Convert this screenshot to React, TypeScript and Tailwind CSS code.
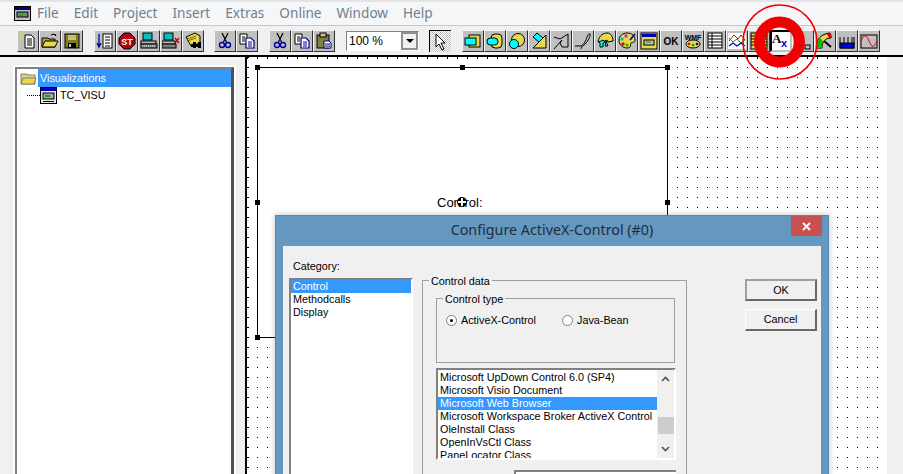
import type { ReactNode } from "react";

const S = ({ children }: { children: ReactNode }) => (
  <svg width="18" height="18" viewBox="0 0 18 18">
    {children}
  </svg>
);

const Btn = ({ children, on }: { children: ReactNode; on?: boolean }) => (
  <div
    className={
      on
        ? "w-[22px] h-[22px] flex items-center justify-center bg-white border-2 border-black border-r-[#c0c0c0] border-b-[#c0c0c0]"
        : "w-[22px] h-[22px] flex items-center justify-center bg-[#c0c0c0] border border-[#f4f4f4] border-r-[#303030] border-b-[#303030]"
    }
  >
    {children}
  </div>
);

const yellow = "#e8d84a";
const cyan = "#00ffff";

const groupA = [
  <S key="new">
    <path d="M6 3h6l3 3v10H6z" fill="#fff" stroke="#000" />
    <path d="M8 7h5M8 9h5M8 11h5M8 13h5" stroke="#000" />
    <path d="M1 3l3 1M3 1l1 3M1 6l3-1" stroke="#e8e000" />
  </S>,
  <S key="open">
    <path d="M1 6h6l1 1h6v8H1z" fill="#a8a040" stroke="#000" />
    <path d="M1 15l3-6h13l-3 6z" fill="#e8d84a" stroke="#000" />
    <path d="M10 3l3-1 2 2M15 4l-1-2" stroke="#000" fill="none" />
  </S>,
  <S key="save">
    <rect x="2" y="2" width="14" height="14" fill="#808020" stroke="#000" />
    <rect x="5" y="3" width="8" height="5" fill="#c0c080" />
    <rect x="5" y="11" width="8" height="5" fill="#000" />
    <rect x="6" y="12" width="2" height="3" fill="#c0c0c0" />
  </S>,
];

const groupB = [
  <S key="ref">
    <rect x="7" y="2" width="9" height="14" fill="#fff" stroke="#000" />
    <path d="M9 5h5M9 8h5M9 11h5M9 14h5" stroke="#000" />
    <path d="M3 2v12M1 11l2 4 2-4" stroke="#0000a0" fill="none" strokeWidth="1.3" />
  </S>,
  <S key="stop">
    <path d="M6 1h6l5 5v6l-5 5H6l-5-5V6z" fill="#b00018" stroke="#000" />
    <text x="9" y="12.5" textAnchor="middle" fontSize="9" fontWeight="700" fill="#fff" fontFamily="Liberation Sans, sans-serif">
      ST
    </text>
  </S>,
  <S key="online">
    <rect x="3" y="1" width="9" height="7" fill="#00c0c0" stroke="#000" />
    <rect x="1" y="9" width="15" height="3" fill="#c0c0c0" stroke="#000" />
    <rect x="1" y="12" width="16" height="4" fill="#808080" stroke="#000" />
    <path d="M2 14h14" stroke="#fff" strokeDasharray="1 1" />
  </S>,
  <S key="offline">
    <rect x="2" y="1" width="9" height="7" fill="#00c0c0" stroke="#000" />
    <rect x="0" y="9" width="13" height="3" fill="#c0c0c0" stroke="#000" />
    <rect x="0" y="12" width="14" height="4" fill="#808080" stroke="#000" />
    <path d="M13 6l4 5M17 6l-4 5" stroke="#c00000" strokeWidth="1.3" />
  </S>,
  <S key="files">
    <path d="M2 5l9-4 5 3v7l-9 3z" fill={yellow} stroke="#000" />
    <path d="M3 7l9-3M3 9l9-3" stroke="#806000" />
    <rect x="9" y="10" width="3" height="6" fill="#000" />
    <rect x="14" y="10" width="3" height="6" fill="#000" />
    <rect x="7" y="12" width="10" height="3" fill="#000" />
  </S>,
];

const Scissors = () => (
  <S>
    <path d="M6 1l5 10M12 1L7 11" stroke="#000" strokeWidth="1.2" />
    <circle cx="6" cy="13" r="2.5" fill="none" stroke="#0000a0" strokeWidth="1.4" />
    <circle cx="12" cy="13" r="2.5" fill="none" stroke="#0000a0" strokeWidth="1.4" />
  </S>
);

const Copy = () => (
  <S>
    <path d="M2 2h7v10H2z" fill="#fff" stroke="#000" />
    <path d="M4 5h3M4 7h3M4 9h3" stroke="#000" />
    <path d="M8 6h5l3 3v7H8z" fill="#fff" stroke="#000080" strokeWidth="1.2" />
    <path d="M10 10h4M10 12h4M10 14h4" stroke="#000080" />
  </S>
);

const groupD = [
  <Scissors key="cut" />,
  <Copy key="copy" />,
  <S key="paste">
    <rect x="2" y="3" width="12" height="13" fill="#808040" stroke="#000" />
    <rect x="5" y="1" width="6" height="4" fill="#d0c080" stroke="#000" />
    <path d="M9 9h5l2 2v5H9z" fill="#fff" stroke="#000080" />
    <path d="M10 12h5M10 14h5" stroke="#000080" />
  </S>,
];

const groupG = [
  <S key="rect">
    <rect x="5" y="3" width="11" height="12" fill={yellow} stroke="#000" />
    <rect x="1" y="6" width="11" height="7" fill={cyan} stroke="#000" />
  </S>,
  <S key="round">
    <rect x="5" y="2" width="11" height="14" rx="4" fill={yellow} stroke="#000" />
    <rect x="1" y="6" width="11" height="7" rx="3.5" fill={cyan} stroke="#000" />
  </S>,
  <S key="circle">
    <circle cx="10" cy="8" r="6.5" fill={yellow} stroke="#000" />
    <circle cx="6" cy="12" r="4.5" fill={cyan} stroke="#000" />
  </S>,
  <S key="poly">
    <path d="M16 3v13H3z" fill={yellow} stroke="#000" />
    <path d="M3 5l4-4 6 5-4 4z" fill={cyan} stroke="#000" />
  </S>,
  <S key="line">
    <path d="M2 5l6 2 8-5v13H10l-2-4 2-3-8 9" fill="none" stroke="#000" />
  </S>,
  <S key="curve">
    <path d="M1 14h5c3 0 6-5 7-9 1-3 3-4 3-3 1 2-3 9-6 11-2 1-3 3-3 4" fill="none" stroke="#000" />
  </S>,
  <S key="hat">
    <path d="M2 10C3 3 8 1 11 1c4 0 6 4 6 8l-5 1-1-2-5 2z" fill={yellow} stroke="#000" />
    <path d="M3 10l4-2 2 2-2 1v4H4v-4z" fill={cyan} stroke="#000" />
    <path d="M10 9l2 5h-3z" fill={cyan} stroke="#000" />
  </S>,
  <S key="palette">
    <path d="M9 1c5 0 8 3 8 7 0 3-3 2-4 3s1 5-4 5C4 16 1 12 1 8s4-7 8-7z" fill={yellow} stroke="#000" />
    <circle cx="8" cy="4" r="1.7" fill="#d020d0" />
    <circle cx="4" cy="7" r="1.7" fill="#00c0c0" />
    <circle cx="5" cy="12" r="1.7" fill="#e00000" />
    <circle cx="9" cy="13" r="1.5" fill="#00c000" />
    <path d="M17 2l-5 6" stroke="#000080" strokeWidth="1.6" />
  </S>,
  <S key="visu">
    <rect x="1" y="1" width="16" height="16" fill={yellow} stroke="#000" />
    <rect x="2" y="2" width="14" height="3" fill="#0000c0" />
    <rect x="4" y="8" width="10" height="5" fill="#c0c0c0" stroke="#000" />
    <path d="M6 10h5" stroke="#00a000" />
  </S>,
  <S key="ok">
    <text x="9" y="13" textAnchor="middle" fontSize="10" fontWeight="700" fill="#000" fontFamily="Liberation Sans, sans-serif">
      OK
    </text>
  </S>,
  <S key="wmf">
    <text x="9" y="8" textAnchor="middle" fontSize="7" fontWeight="700" fill="#000" fontFamily="Liberation Sans, sans-serif">
      WMF
    </text>
    <ellipse cx="9" cy="12" rx="7" ry="4" fill={yellow} stroke="#000" />
    <circle cx="5" cy="12" r="1.3" fill="#e00000" />
    <circle cx="9" cy="13" r="1.3" fill="#00a000" />
    <circle cx="13" cy="12" r="1.3" fill="#0000c0" />
  </S>,
  <S key="table">
    <rect x="2" y="1" width="14" height="15" fill="#fff" stroke="#000" />
    <path d="M2 4h14M2 7h14M2 10h14M2 13h14M6 1v15" stroke="#000" />
  </S>,
  <S key="chart">
    <rect x="0" y="1" width="18" height="16" fill="#fff" />
    <path d="M1 9l5-6 4 4 3-4 4 5" fill="none" stroke="#e00000" />
    <path d="M1 6l4 4 4-3 4 4 4-3" fill="none" stroke="#00a000" />
    <path d="M1 14l4-3 4 3 4-3 4 3" fill="none" stroke="#0000e0" strokeWidth="1.3" />
  </S>,
  <S key="list">
    <rect x="1" y="1" width="16" height="16" fill={yellow} stroke="#000" />
    <path d="M1 4h16M1 7h16M1 10h16M1 13h16M6 1v16" stroke="#000" />
  </S>,
];

const groupH = [
  <S key="slider">
    <rect x="1" y="13" width="5" height="4" fill="#c0c0c0" stroke="#000" />
    <rect x="11" y="13" width="5" height="4" fill="#c0c0c0" stroke="#000" />
  </S>,
  <S key="meter">
    <path d="M1 16C0 7 5 2 14 1l1 5C9 6 6 10 6 16z" fill={yellow} stroke="#000" />
    <path d="M1 16C1 12 2 9 4 6l3 3c-1 2-1 4-1 7z" fill="#00c000" />
    <path d="M11 2l4-1 1 5-3 0z" fill="#e00000" />
    <path d="M8 9l7 6" stroke="#000" strokeWidth="2" />
  </S>,
  <S key="tank">
    <path d="M2 5v11h14V5M6 5v8M10 5v8M14 5v8" fill="none" stroke="#000" />
    <rect x="2" y="11" width="14" height="5" fill="#0000e0" stroke="#000" />
  </S>,
  <S key="wave">
    <rect x="1" y="3" width="16" height="13" fill="#c0c0c0" stroke="#000" />
    <path d="M1 9c3-7 5-7 8 0s5 7 8 0" fill="none" stroke="#e00000" />
  </S>,
];

const Visu = () => (
  <svg width="17" height="17" viewBox="0 0 17 17">
    <rect x="0.5" y="0.5" width="16" height="16" fill="#e8e8e8" stroke="#000" />
    <rect x="1" y="1" width="15" height="3" fill="#0000c0" />
    <rect x="3" y="6" width="11" height="6" fill="#a8a8a8" stroke="#000" />
    <rect x="5" y="8" width="5" height="2" fill="#00b000" />
    <rect x="3" y="14" width="11" height="1" fill="#000" />
  </svg>
);

const Handle = ({ className }: { className: string }) => (
  <div className={"absolute w-[5px] h-[5px] bg-black " + className} />
);

const list = [
  "Microsoft UpDown Control 6.0 (SP4)",
  "Microsoft Visio Document",
  "Microsoft Web Browser",
  "Microsoft Workspace Broker ActiveX Control",
  "OleInstall Class",
  "OpenInVsCtl Class",
  "PaneLocator Class",
];

export default function App() {
  return (
    <div className="relative w-[903px] h-[474px] overflow-hidden flex flex-col bg-[#f0f0f0] font-['Liberation_Sans',sans-serif] text-[10.8px] text-black">
      {/* title menu */}
      <div className="h-[26px] shrink-0 flex items-center pl-[14px] bg-[#f5f6f8] border-t-2 border-[#e4e4e4] border-b border-b-[#c8c8c8] text-[#6f7f90] font-['Noto_Sans',sans-serif] text-[13.6px]">
        <div className="w-[23px]">
          <svg width="17" height="15" viewBox="0 0 17 15">
            <rect x="0.5" y="0.5" width="16" height="14" fill="#c0c0c0" stroke="#000" />
            <rect x="1" y="1" width="15" height="3" fill="#000080" />
            <rect x="3" y="6" width="11" height="5" fill="#808080" stroke="#000" />
            <rect x="5" y="8" width="4" height="2" fill="#00c000" />
          </svg>
        </div>
        <div className="flex gap-[15px]">
          {["File", "Edit", "Project", "Insert", "Extras", "Online", "Window", "Help"].map((m) => (
            <span key={m}>{m}</span>
          ))}
        </div>
      </div>

      {/* toolbar */}
      <div className="h-[31px] shrink-0 flex items-center pl-[17px] pt-[1px] bg-[#f0f0f0] border-b-2 border-black">
        <div className="flex mr-[11px]">{groupA.map((i, n) => <Btn key={n}>{i}</Btn>)}</div>
        <div className="flex mr-[10px]">{groupB.map((i, n) => <Btn key={n}>{i}</Btn>)}</div>
        <div className="flex mr-[11px]">
          <Btn><Scissors /></Btn>
          <Btn><Copy /></Btn>
        </div>
        <div className="flex mr-[11px]">{groupD.map((i, n) => <Btn key={n}>{i}</Btn>)}</div>
        <div className="w-[73px] h-[20px] mr-[10px] flex items-center justify-between bg-white border border-[#808080] border-r-white border-b-white">
          <span className="pl-[2px] text-[12px]">100 %</span>
          <div className="w-[17px] h-[18px] flex items-center justify-center bg-[#f0f0f0] border-2 border-[#909090]">
            <div className="w-0 h-0 border-x-[4px] border-x-transparent border-t-[4px] border-t-black" />
          </div>
        </div>
        <div className="w-[22px] h-[22px] mr-[11px] flex items-center justify-center border-t border-l border-black bg-[repeating-conic-gradient(#c0c0c0_0_25%,#ffffff_0_50%)] bg-[length:2px_2px]">
          <svg width="14" height="18" viewBox="0 0 14 18">
            <path d="M2 1v13l3-3 3 6 2-1-3-6h4z" fill="#fff" stroke="#000" />
          </svg>
        </div>
        <div className="flex">
          {groupG.map((i, n) => <Btn key={n}>{i}</Btn>)}
          <Btn on>
            <svg width="18" height="18" viewBox="0 0 18 18" className="shrink-0">
              <text x="0" y="11" fontSize="13" fontWeight="700" fill="#000" fontFamily="Liberation Serif, serif">A</text>
              <text x="9" y="15" fontSize="11" fontWeight="700" fill="#0000e0" fontFamily="Liberation Sans, sans-serif">x</text>
            </svg>
          </Btn>
          {groupH.map((i, n) => <Btn key={n}>{i}</Btn>)}
        </div>
      </div>

      {/* panes */}
      <div className="flex-1 flex min-h-0">
        <div className="w-[245px] shrink-0 pt-[8px] pl-[13px]">
          <div className="w-[223px] h-full bg-white border-t-2 border-l-2 border-r-2 border-white">
            <div className="h-full bg-white border-l-2 border-t-2 border-r-[3px] border-[#808080] border-r-[#505050]">
              <div className="flex items-center h-[18px] pl-[3px]">
                <svg width="17" height="15" viewBox="0 0 17 15">
                  <path d="M1 3h6l1 1h7v9H1z" fill="#d8d0a0" stroke="#808060" />
                  <path d="M1 13l2-6h13l-2 6z" fill={yellow} stroke="#808060" />
                </svg>
                <div className="flex-1 h-[18px] ml-[1px] pl-[2px] flex items-center bg-[#3399ff] text-white">
                  Visualizations
                </div>
              </div>
              <div className="flex items-center h-[17px] pl-[10px]">
                <div className="w-[13px] border-t border-dotted border-black" />
                <Visu />
                <span className="ml-[3px]">TC_VISU</span>
              </div>
            </div>
          </div>
        </div>

        <div className="relative flex-1 bg-white border-l-2 border-black">
          <svg className="absolute inset-0 w-full h-full">
            <defs>
              <pattern id="dots" width="10" height="10" patternUnits="userSpaceOnUse" x="0" y="0">
                <rect width="1" height="1" fill="#000" />
              </pattern>
              <pattern id="ticksTop" width="10" height="3" patternUnits="userSpaceOnUse" x="0" y="0">
                <rect width="1" height="2" fill="#000" />
              </pattern>
              <pattern id="ticksLeft" width="3" height="10" patternUnits="userSpaceOnUse" x="0" y="0">
                <rect width="2" height="1" fill="#000" />
              </pattern>
            </defs>
            <rect width="100%" height="100%" fill="url(#dots)" />
            <rect width="100%" height="3" fill="url(#ticksTop)" />
            <rect width="3" height="100%" fill="url(#ticksLeft)" />
          </svg>

          {/* visu element on the canvas */}
          <div className="absolute left-[10px] top-[10px] w-[411px] h-[271px] bg-white border border-black">
            <span className="absolute left-[179px] top-[127px] text-[13px] leading-[15px]">Control:</span>
            <div className="absolute left-[199px] top-[129px] w-[10px] h-[10px] rounded-full bg-black flex items-center justify-center">
              <div className="w-[8px] h-[2px] bg-white" />
              <div className="absolute w-[2px] h-[8px] bg-white" />
            </div>
          </div>
          <Handle className="left-[8px] top-[8px]" />
          <Handle className="left-[213px] top-[8px]" />
          <Handle className="left-[418px] top-[8px]" />
          <Handle className="left-[8px] top-[143px]" />
          <Handle className="left-[418px] top-[143px]" />
          <Handle className="left-[8px] top-[278px]" />

          <div className="absolute right-0 top-0 bottom-0 w-[16px] bg-[#f0f0f0]" />
        </div>
      </div>

      {/* dialog */}
      <div className="absolute left-[275px] top-[215px] w-[554px] h-[270px] flex flex-col bg-[#6498c1] border border-[#5a86aa] shadow-[0_0_6px_rgba(0,0,0,0.25)]">
        <div className="relative h-[30px] shrink-0 flex items-center justify-center pb-[3px] font-['Noto_Sans',sans-serif] text-[14.3px] text-[#1f2d3d]">
          Configure ActiveX-Control (#0)
          <div className="absolute right-[6px] top-0 w-[31px] h-[20px] flex items-center justify-center bg-[#c75050]">
            <svg width="9" height="9" viewBox="0 0 9 9">
              <path d="M1 1l7 7M8 1L1 8" stroke="#fff" strokeWidth="1.8" />
            </svg>
          </div>
        </div>
        <div className="flex-1 mx-[7px] flex bg-[#f0f0f0] pl-[6px] pt-[14px]">
          <div className="w-[133px] shrink-0">
            <div className="pl-[4px] h-[18px] leading-[12px]">Category:</div>
            <div className="w-[124px] h-[220px] bg-white border-2 border-[#808080] border-r-white border-b-white leading-[13px]">
              <div className="bg-[#3399ff] text-white pl-[2px]">Control</div>
              <div className="pl-[2px]">Methodcalls</div>
              <div className="pl-[2px]">Display</div>
            </div>
          </div>

          <div className="relative w-[265px] h-[220px] mt-[20px] border border-[#a0a0a0] px-[13px] pt-[17px] shrink-0">
            <span className="absolute left-[6px] top-[-6px] px-[2px] bg-[#f0f0f0] leading-[12px]">Control data</span>
            <div className="relative h-[65px] w-[239px] border border-[#a0a0a0] flex items-center pl-[9px] pb-[20px] gap-[4px]">
              <span className="absolute left-[6px] top-[-6px] px-[2px] bg-[#f0f0f0] leading-[12px]">Control type</span>
              <div className="w-[11px] h-[11px] rounded-full bg-white border border-[#808080] flex items-center justify-center">
                <div className="w-[3px] h-[3px] rounded-full bg-black" />
              </div>
              <span className="w-[97px]">ActiveX-Control</span>
              <div className="w-[11px] h-[11px] rounded-full bg-white border border-[#808080]" />
              <span>Java-Bean</span>
            </div>
            <div className="flex w-[240px] h-[92px] mt-[5px] bg-white border-2 border-[#808080] border-r-white border-b-white overflow-hidden">
              <div className="flex-1 leading-[13px] pt-[1px]">
                {list.map((l) => (
                  <div key={l} className={l === "Microsoft Web Browser" ? "bg-[#3399ff] text-white pl-[2px] whitespace-nowrap" : "pl-[2px] whitespace-nowrap"}>
                    {l}
                  </div>
                ))}
              </div>
              <div className="w-[17px] flex flex-col bg-[#f0f0f0] items-center pt-[6px]">
                <svg width="9" height="6" viewBox="0 0 9 6">
                  <path d="M1 5l3.5-3.5L8 5" fill="none" stroke="#505050" strokeWidth="1.6" />
                </svg>
                <div className="w-[16px] h-[17px] mt-[35px] bg-[#cdcdcd]" />
                <svg className="mt-[12px]" width="9" height="6" viewBox="0 0 9 6">
                  <path d="M1 1l3.5 3.5L8 1" fill="none" stroke="#505050" strokeWidth="1.6" />
                </svg>
              </div>
            </div>
            <div className="ml-[78px] w-[162px] h-[10px] mt-[10px] border-t-2 border-l-2 border-[#808080] bg-white" />
          </div>

          <div className="ml-[58px] mt-[19px] w-[72px] shrink-0 flex flex-col gap-[8px]">
            <div className="h-[22px] flex items-center justify-center bg-[#f0f0f0] border-2 border-[#696969] border-t-[#a0a0a0] border-l-[#a0a0a0]">OK</div>
            <div className="h-[22px] flex items-center justify-center bg-[#f0f0f0] border border-white border-r-[#696969] border-b-[#696969] border-b-2 border-r-2">Cancel</div>
          </div>
        </div>
      </div>

      {/* red annotation */}
      <svg className="absolute left-[735px] top-0 pointer-events-none" width="90" height="84" viewBox="0 0 90 84">
        <circle cx="45" cy="42" r="37" fill="none" stroke="#f00000" strokeWidth="1.6" />
        <circle cx="44.500" cy="42" r="20" fill="none" stroke="#f00000" strokeWidth="11" />
      </svg>
    </div>
  );
}
